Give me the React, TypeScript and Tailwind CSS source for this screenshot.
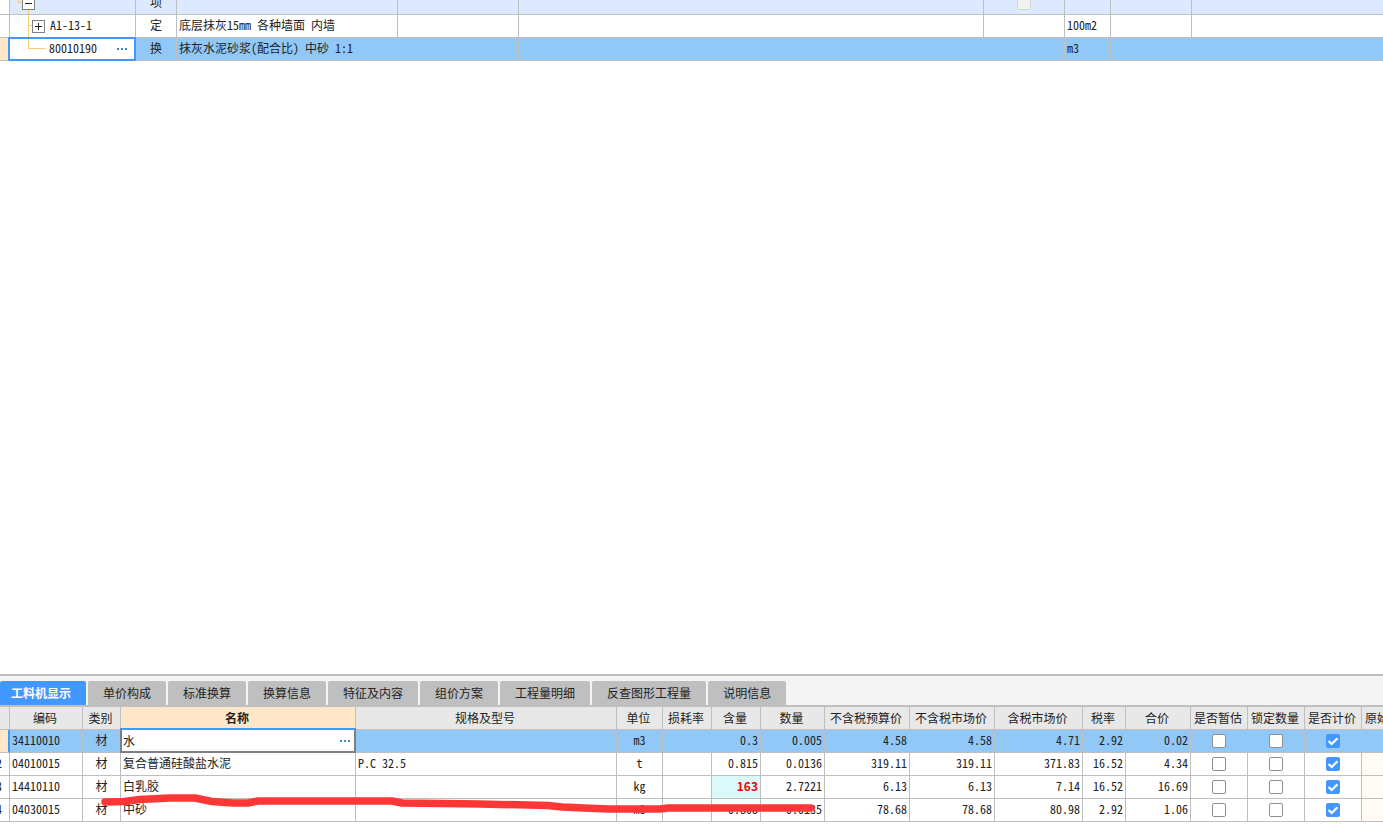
import React from 'react';

type Align = 'left' | 'center' | 'right';

interface MaterialColumn {
  key: string;
  label: string;
  align: Align;
}

interface MaterialRow {
  id: string;
  selected?: boolean;
  values: Record<string, string>;
}

const tabs = [
  '工料机显示',
  '单价构成',
  '标准换算',
  '换算信息',
  '特征及内容',
  '组价方案',
  '工程量明细',
  '反查图形工程量',
  '说明信息',
];

const columns: MaterialColumn[] = [
  { key: 'code', label: '编码', align: 'left' },
  { key: 'kind', label: '类别', align: 'center' },
  { key: 'name', label: '名称', align: 'left' },
  { key: 'spec', label: '规格及型号', align: 'left' },
  { key: 'unit', label: '单位', align: 'center' },
  { key: 'loss', label: '损耗率', align: 'right' },
  { key: 'content', label: '含量', align: 'right' },
  { key: 'quantity', label: '数量', align: 'right' },
  { key: 'budget', label: '不含税预算价', align: 'right' },
  { key: 'netPrice', label: '不含税市场价', align: 'right' },
  { key: 'grossPrice', label: '含税市场价', align: 'right' },
  { key: 'tax', label: '税率', align: 'right' },
  { key: 'total', label: '合价', align: 'right' },
];

const flags = [
  { label: '是否暂估', checked: false },
  { label: '锁定数量', checked: false },
  { label: '是否计价', checked: true },
];

const rows: MaterialRow[] = [
  {
    id: '1',
    selected: true,
    values: {
      code: '34110010', kind: '材', name: '水', unit: 'm3', content: '0.3', quantity: '0.005',
      budget: '4.58', netPrice: '4.58', grossPrice: '4.71', tax: '2.92', total: '0.02',
    },
  },
  {
    id: '2',
    values: {
      code: '04010015', kind: '材', name: '复合普通硅酸盐水泥', spec: 'P.C 32.5', unit: 't', content: '0.815', quantity: '0.0136',
      budget: '319.11', netPrice: '319.11', grossPrice: '371.83', tax: '16.52', total: '4.34',
    },
  },
  {
    id: '3',
    values: {
      code: '14410110', kind: '材', name: '白乳胶', unit: 'kg', content: '163', quantity: '2.7221',
      budget: '6.13', netPrice: '6.13', grossPrice: '7.14', tax: '16.52', total: '16.69',
    },
  },
  {
    id: '4',
    values: {
      code: '04030015', kind: '材', name: '中砂', unit: 'm3', content: '0.808', quantity: '0.0135',
      budget: '78.68', netPrice: '78.68', grossPrice: '80.98', tax: '2.92', total: '1.06',
    },
  },
];

const alignClass: Record<Align, string> = {
  left: 'text-left',
  center: 'text-center',
  right: 'text-right',
};

const cell = 'h-[23px] overflow-hidden border-r border-b border-[#bfbfbf] px-0.5 whitespace-nowrap';
const plainCell = `${cell} py-0`;
const textCell = `${cell} pt-0 pb-0.5`;
const headCell = `${cell} py-0 pr-[3px] pl-px`;

const MoreButton: React.FC<{ label: string }> = ({ label }) => (
  <button type="button" aria-label={label} className="flex gap-0.5 p-0.5">
    {[0, 1, 2].map(i => (
      <span key={i} className="size-0.5 bg-[#3d87c8]" />
    ))}
  </button>
);

const TreeToggle: React.FC<{ open?: boolean }> = ({ open = false }) => (
  <button
    type="button"
    aria-label={open ? '折叠' : '展开'}
    className="relative size-[13px] shrink-0 border border-[#808080] bg-white"
  >
    <svg viewBox="0 0 11 11" className="size-[11px]" stroke="#222" shapeRendering="crispEdges">
      <path d={open ? 'M2 5.5h7' : 'M2 5.5h7M5.5 2v7'} />
    </svg>
  </button>
);

const TreeLines: React.FC<{ d: string }> = ({ d }) => (
  <svg
    className="pointer-events-none absolute top-0 left-0 h-[23px] w-12"
    viewBox="0 0 48 23"
    fill="none"
    stroke="#ffc875"
    shapeRendering="crispEdges"
  >
    <path d={d} />
  </svg>
);

const CheckBox: React.FC<{ label: string; checked?: boolean; disabled?: boolean }> = ({
  label,
  checked = false,
  disabled = false,
}) => (
  <span className="relative mx-auto block size-[14px]">
    <input
      type="checkbox"
      aria-label={label}
      defaultChecked={checked}
      disabled={disabled}
      className="peer block size-[14px] appearance-none rounded-[2px] border border-[#8f8f8f] bg-white checked:border-[#4398ff] checked:bg-[#4398ff] disabled:border-[#d6d6d6] disabled:bg-[#f2f2f2]"
    />
    <svg
      viewBox="0 0 14 14"
      className="pointer-events-none absolute inset-0 hidden size-[14px] peer-checked:block"
      fill="none"
      stroke="#fff"
      strokeWidth="2.2"
    >
      <path d="M2.5 7l3.2 3 5.8-5.8" />
    </svg>
  </span>
);

const BudgetTable: React.FC = () => (
  <table className="-mt-2 w-full table-fixed border-separate border-spacing-0">
    <colgroup>
      <col className="w-[10px]" />
      <col className="w-[126px]" />
      <col className="w-[41px]" />
      <col className="w-[221px]" />
      <col className="w-[121px]" />
      <col className="w-[465px]" />
      <col className="w-[81px]" />
      <col className="w-[46px]" />
      <col className="w-[81px]" />
      <col />
    </colgroup>
    <tbody>
      <tr className="bg-[#dce9ff]">
        <td className={`${plainCell} bg-white`} />
        <td className={`${plainCell} relative`}>
          <TreeLines d="M8.5 8v2.5H12M18.5 17v6" />
          <div className="flex pl-2.5">
            <TreeToggle open />
          </div>
        </td>
        <td className={`${textCell} text-center`}>项</td>
        <td className={plainCell} />
        <td className={plainCell} />
        <td className={plainCell} />
        <td className={plainCell}>
          <CheckBox label="锁定综合单价" disabled />
        </td>
        <td className={plainCell} />
        <td className={plainCell} />
        <td className={`${plainCell} border-r-0`} />
      </tr>
      <tr>
        <td className={plainCell} />
        <td className={`${plainCell} relative`}>
          <TreeLines d="M18.5 0v23M18.5 10.5H22" />
          <div className="flex items-center gap-[5px] pl-5">
            <TreeToggle />
            <span className="pb-0.5">A1-13-1</span>
          </div>
        </td>
        <td className={`${textCell} text-center`}>定</td>
        <td className={textCell}>底层抹灰15mm 各种墙面 内墙</td>
        <td className={plainCell} />
        <td className={plainCell} />
        <td className={plainCell} />
        <td className={textCell}>100m2</td>
        <td className={plainCell} />
        <td className={`${plainCell} border-r-0`} />
      </tr>
      <tr className="bg-[#91c8f7]">
        <td className={`${plainCell} bg-[#ffe7c8]`} />
        <td className="relative h-[23px] border-r border-b border-[#bfbfbf] p-0">
          <div className="absolute -inset-px -left-0.5 flex items-center justify-between border-2 border-[#4398ff] bg-white pr-[5px] pl-[39px]">
            <span className="pb-0.5">80010190</span>
            <MoreButton label="选择编码" />
          </div>
          <TreeLines d="M18.5 1v9.5H35" />
        </td>
        <td className={`${textCell} text-center`}>换</td>
        <td className={textCell}>抹灰水泥砂浆(配合比) 中砂 1:1</td>
        <td className={plainCell} />
        <td className={plainCell} />
        <td className={plainCell} />
        <td className={textCell}>m3</td>
        <td className={plainCell} />
        <td className={`${plainCell} border-r-0`} />
      </tr>
    </tbody>
  </table>
);

const MaterialTable: React.FC = () => (
  <table className="w-full table-fixed border-separate border-spacing-0">
    <colgroup>
      <col className="w-[10px]" />
      <col className="w-[73px]" />
      <col className="w-[38px]" />
      <col className="w-[235px]" />
      <col className="w-[261px]" />
      <col className="w-[46px]" />
      <col className="w-[49px]" />
      <col className="w-[49px]" />
      <col className="w-[64px]" />
      <col className="w-[85px]" />
      <col className="w-[85px]" />
      <col className="w-[88px]" />
      <col className="w-[43px]" />
      <col className="w-[65px]" />
      <col className="w-[57px]" />
      <col className="w-[57px]" />
      <col className="w-[57px]" />
      <col />
    </colgroup>
    <thead>
      <tr className="bg-[#e8e8e8]">
        <th className={headCell} />
        {columns.map(col => (
          <th
            key={col.key}
            className={`${headCell} ${col.key === 'name' ? 'bg-[#ffe7c8] font-bold' : 'font-normal'}`}
          >
            {col.label}
          </th>
        ))}
        {flags.map(flag => (
          <th key={flag.label} className={`${headCell} font-normal`}>
            {flag.label}
          </th>
        ))}
        <th className={`${headCell} border-r-0 text-left font-normal`}>
          <span className="pl-0.5">原始含量</span>
        </th>
      </tr>
    </thead>
    <tbody>
      {rows.map(row => (
        <tr key={row.id} className={row.selected ? 'bg-[#91c8f7]' : 'bg-white'}>
          {row.selected ? (
            <td className="h-[23px] border-r-2 border-b border-r-[#4398ff] border-b-[#bfbfbf] bg-[#ffe7c8] p-0" />
          ) : (
            <td className={textCell}>
              <span className="-ml-1.5 block">{row.id}</span>
            </td>
          )}
          {columns.map(col => {
            if (row.selected && col.key === 'name') {
              return (
                <td key={col.key} className="relative h-[23px] p-0">
                  <div className="absolute -top-0.5 right-0 bottom-0 -left-px flex items-center justify-between border-2 border-[#808080] border-t-[#4398ff] bg-white pr-0.5 pl-px">
                    {row.values.name}
                    <MoreButton label="选择材料" />
                  </div>
                </td>
              );
            }
            // Manually edited amounts are flagged in bold red
            const edited = row.id === '3' && col.key === 'content';
            return (
              <td
                key={col.key}
                className={`${textCell} ${alignClass[col.align]} ${
                  edited ? 'bg-[#dafafa] font-bold text-[#ff0000] [font-feature-settings:normal]' : ''
                }`}
              >
                {row.values[col.key]}
              </td>
            );
          })}
          {flags.map(flag => (
            <td key={flag.label} className={plainCell}>
              <CheckBox label={`${row.values.name} ${flag.label}`} checked={flag.checked} />
            </td>
          ))}
          <td className={`${plainCell} border-r-0 ${row.selected ? '' : 'bg-[#fffaf4]'}`} />
        </tr>
      ))}
    </tbody>
  </table>
);

// Hand-drawn marker line running across the last two rows
const MarkerStroke: React.FC = () => (
  <svg
    className="pointer-events-none absolute top-0 left-0 h-[115px] w-[830px]"
    viewBox="0 0 830 115"
    fill="none"
    stroke="#fc3736"
    strokeWidth="7.5"
    strokeLinecap="round"
    strokeLinejoin="round"
  >
    <path d="M105 95L124 94.5L140 92.5L170 91L195 91L212 94.5L233 96L248 96L258 94L392 94L402 96L480 97L548 98.5L562 100L584 101L608 102L660 102L668 101L811 101" />
  </svg>
);

export default function App() {
  return (
    <div className="flex h-screen flex-col overflow-hidden bg-white font-['Noto_Sans_CJK_SC',sans-serif] text-[12px] leading-[18px] text-[#222] [font-feature-settings:'hwid']">
      <main className="min-h-0 flex-1 overflow-hidden">
        <BudgetTable />
      </main>
      <section className="border-t-2 border-[#bfbfbf] pb-3">
        <div
          role="tablist"
          className="flex gap-0.5 border-b-2 border-[#bfbfbf] bg-[#f4f4f4] pt-[5px]"
        >
          {tabs.map((tab, i) => (
            <button
              key={tab}
              type="button"
              role="tab"
              aria-selected={i === 0}
              className={`h-6 rounded-t-[2px] ${
                i === 0 ? 'bg-[#4398ff] pr-[15px] pl-[11px] font-bold text-white' : 'bg-[#bfbfbf] px-[15px]'
              }`}
            >
              {tab}
            </button>
          ))}
        </div>
        <div className="relative">
          <MaterialTable />
          <MarkerStroke />
        </div>
      </section>
    </div>
  );
}
